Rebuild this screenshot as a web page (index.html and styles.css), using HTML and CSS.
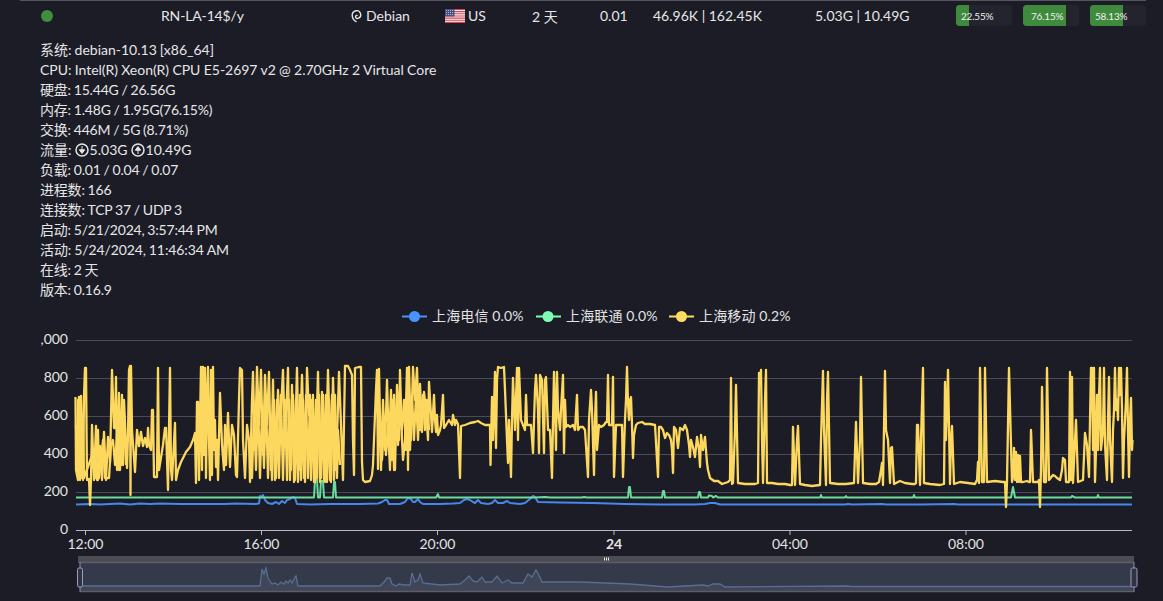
FILE: index.html
```html
<!DOCTYPE html>
<html lang="zh">
<head>
<meta charset="utf-8">
<title>RN-LA-14$/y</title>
<link rel="stylesheet" href="styles.css">
</head>
<body>
<div class="row">
  <div class="cell"><span class="dot"></span></div>
  <div class="cell name">RN-LA-14$/y</div>
  <div class="cell os">
    <svg class="swirl" viewBox="0 0 12 14"><path d="M6.600 6.600c-.9-.6-2.200 0-2.100 1.400.1 1.200 1.600 1.900 3 1.200 1.700-.9 2.600-2.800 2-4.600C8.900 2.500 7 1.300 5 1.700 2.600 2.200 1 4.300 1.200 6.800c.2 2.700 1.900 4.900 4.300 6" /></svg>
    <span>Debian</span>
  </div>
  <div class="cell os">
    <svg class="flag" viewBox="0 0 20 14">
      <rect width="20" height="14" fill="#f3f0f0"/>
      <path d="M0 .5h20M0 2.650h20M0 4.800h20M0 6.950h20M0 9.100h20M0 11.250h20M0 13.400h20" stroke="#d5495a" stroke-width="1.100"/>
      <rect width="9.500" height="7.500" fill="#4a4f82"/>
      <path d="M1 1.500h8M1 3.500h8M1 5.500h8" stroke="#c9cbe0" stroke-width=".8" stroke-dasharray="1 1"/>
    </svg>
    <span>US</span>
  </div>
  <div class="cell">2 天</div>
  <div class="cell">0.01</div>
  <div class="cell">46.96K | 162.45K</div>
  <div class="cell">5.03G | 10.49G</div>
  <div class="bars">
    <div class="bar"><div class="fill" style="width:22.55%"></div><span class="pct pct-a">22.55%</span></div>
    <div class="bar"><div class="fill" style="width:76.15%"></div><span class="pct pct-b">76.15%</span></div>
    <div class="bar"><div class="fill" style="width:58.13%"></div><span class="pct pct-a">58.13%</span></div>
  </div>
</div>

<div class="info">
  <div class="loose">系统: debian-10.13 [x86_64]</div>
  <div class="cpu">CPU: Intel(R) Xeon(R) CPU E5-2697 v2 @ 2.70GHz 2 Virtual Core</div>
  <div>硬盘: 15.44G / 26.56G</div>
  <div>内存: 1.48G / 1.95G(76.15%)</div>
  <div>交换: 446M / 5G (8.71%)</div>
  <div class="loose">流量: <svg class="arrow" viewBox="0 0 14 14"><circle cx="7" cy="7" r="6" fill="none" stroke="#e6e6e6" stroke-width="1.500"/><path d="M7 3v5M4.300 6.800 7 10.500l2.700-3.700z" fill="#e6e6e6" stroke="#e6e6e6"/></svg>5.03G <svg class="arrow" viewBox="0 0 14 14"><circle cx="7" cy="7" r="6" fill="none" stroke="#e6e6e6" stroke-width="1.500"/><path d="M7 11V6M4.300 7.200 7 3.500l2.700 3.700z" fill="#e6e6e6" stroke="#e6e6e6"/></svg>10.49G</div>
  <div>负载: 0.01 / 0.04 / 0.07</div>
  <div>进程数: 166</div>
  <div>连接数: TCP 37 / UDP 3</div>
  <div>启动: 5/21/2024, 3:57:44 PM</div>
  <div class="mid">活动: 5/24/2024, 11:46:34 AM</div>
  <div>在线: 2 天</div>
  <div>版本: 0.16.9</div>
</div>

<svg class="chart" viewBox="0 300 1163 301">
  <g class="legend">
    <path class="s-blue" d="M402 316.500h25"/><circle class="d-blue" cx="414.500" cy="316.500" r="5.500"/>
    <text x="432" y="321">上海电信 0.0%</text>
    <path class="s-green" d="M536 316.500h25"/><circle class="d-green" cx="548" cy="316.500" r="5.500"/>
    <text x="566" y="321">上海联通 0.0%</text>
    <path class="s-yellow" d="M669 316.500h25"/><circle class="d-yellow" cx="681.500" cy="316.500" r="5.500"/>
    <text x="699" y="321">上海移动 0.2%</text>
  </g>

  <path class="grid" d="M76 340.500H1132M76 378.500H1132M76 416.500H1132M76 454.500H1132M76 492.500H1132"/>
  <path class="axis" d="M76 530.500H1132M85.500 530v5M261.500 530v5M437.500 530v5M614 530v5M790 530v5M966 530v5"/>

  <g class="ylabels">
    <text x="68" y="344">,000</text>
    <text x="68" y="382">800</text>
    <text x="68" y="420">600</text>
    <text x="68" y="458">400</text>
    <text x="68" y="496">200</text>
    <text x="68" y="534">0</text>
  </g>
  <g class="xlabels">
    <text x="85.500" y="549">12:00</text>
    <text x="261.500" y="549">16:00</text>
    <text x="437.500" y="549">20:00</text>
    <text class="bold" x="614" y="549">24</text>
    <text x="790" y="549">04:00</text>
    <text x="966" y="549">08:00</text>
  </g>

  <polyline class="line thin blue" points="76,504.500 90,504 100,504.500 120,503.500 130,504.500 140,503.500 150,504 160,503.500 180,504 200,504 225,504 235,503.500 255,504 259,503.500 260,496 262,497 263,495 265,500 268,503 272,504 276,502 279,504 282,501 285,503 287,500 290,499 293,497 295,498 297,504 310,504.500 330,504 360,504 378,503.500 382,502 385,500 387,500 389,504 400,504 405,502 408,498 411,499 413,502 415,502 418,499 420,502 423,504 440,504 453,503.500 460,503 464,500 467,499 470,500 473,502 475,503 478,500 481,503 488,504 492,503 495,500 498,503 503,503 507,501 510,503 520,504 525,503 530,499 533,496 535,497 538,502 560,502.500 593,503 625,504 660,504.500 695,504.500 705,504 710,503 715,503 720,504.500 845,504.500 848,504 852,504.500 882,504 886,504.500 920,504.500 954,504 958,504.500 990,504.500 1132,504.500"/>
  <polyline class="line thin green" points="76,497.500 314,497.500 315,480 317,479 318,497.500 320,497.500 321,481 323,481 324,497.500 333,497.500 334,482 335,482 336,497.500 436,497.500 438,494 439,497.500 535,497.500 545,497 550,497.500 582,497.500 584,497 587,497.500 628,497.500 629,487 630,487 631,497.500 662,497.500 663,491 664,491 665,497.500 698,497.500 699,492 700,492 701,497.500 708,497.500 709,495.500 712,496 713,497.500 716,496 718,497.500 820,497.500 821,495 822,497.500 845,497.500 846,496 847,497.500 913,497.500 914,495 915,497.500 1011,497.500 1013,487 1015,497.500 1071,497.500 1072,496 1075,497.500 1097,497.500 1098,495 1099,497.500 1132,497.500"/>
  <polyline class="line yellow" points="75.500,397 76,470 78,480 79,397 80,480 81,396 83,480 84,396 85,368 86,368 87,480 89,479 90,505 91,480 92,425 94,480 96,426 97,480 98,480 100,446 102,480 104,432 106,480 108,437 110,463 112,370 114,428 115,428 116,377 117,470 119,393 120,470 122,395 123,465 124,400 127,468 128,435 129,370 130,366 130.500,495 131,366 132,430 135,472 137,430 139,446 141,432 143,446 145,438 147,447 148,428 149,445 151,450 152,410 153,410 154,477 157,477 158,368 159,470 163,445 165,428 166,428 168,490 170,368 171,470 172,480 175,423 176,480 178,470 181,462 183,458 186,452 190,447 193,440 195,433 196,483 197,402 198,402 199,480 201,367 202,470 203,367 204,455 205,368 206,478 207,400 208,367 209,440 210,480 211,370 212,475 213,367 214,450 215,420 216,467 217,440 218,480 220,393 222,445 224,470 225,425 226,465 228,413 230,467 232,425 234,435 236,475 237,477 239,400 240,368 242,370 243,440 245,478 247,425 249,440 250,482 252,400 253,372 255,450 257,367 259,425 261,370 263,455 265,375 267,425 269,372 271,470 273,380 275,480 278,390 280,430 283,370 285,445 288,368 290,480 292,385 294,482 297,368 299,470 302,375 305,482 307,368 309,415 312,400 315,482 318,372 320,482 322,392 325,482 328,370 331,482 333,378 336,470 339,372 341,425 343,480 345,366 348,366 350,370 352,375 353,440 354,475 355,368 359,367 361,367 362,462 363,480 365,482 370,481 372,475 373,465 374,440 376,390 377,370 378,469 379,369 381,470 383,400 385,450 387,380 389,450 391,390 392,460 394,395 395,470 397,385 399,440 400,370 402,440 403,460 405,440 407,368 408,470 409,367 411,440 413,367 415,400 417,368 419,430 420,384 422,432 424,392 426,410 428,440 429,382 431,415 432,432 434,395 435,420 436,432 437,415 438,435 440,430 441,425 443,395 444,428 446,425 449,420 452,425 453,415 455,425 456,420 458,424 460,478 461,426 465,425 470,423 475,422 478,421 481,423 485,425 490,425 490.500,465 492,397 493,440 495,372 496,448 497,380 498,367 501,368 504,367 505,390 507,440 508,463 509,420 511,477 512,420 513,378 515,430 517,368 518,440 519,368 521,420 523,425 525,430 526,395 527,425 531,425 533,453 535,390 536,375 538,410 539,453 540,375 542,380 544,453 545,380 546,377 548,430 550,430 552,478 553,420 554,372 556,450 557,372 558,410 560,430 561,410 563,375 564,453 565,400 566,427 568,425 570,427 573,425 575,430 577,395 578,430 580,427 583,427 585,430 588,477 589,420 591,390 592,410 594,475 595,420 596,392 597,450 599,425 601,427 604,425 606,422 607,422 608,375 609,425 612,425 613,377 614,477 616,425 620,425 622,425 623,477 625,420 626,400 627,367 628,403 629,420 630,400 631,397 632,425 633,458 634,435 636,425 638,423 642,422 645,424 650,424 655,425 658,477 659,427 661,427 663,430 665,438 667,433 669,435 671,440 672,450 673,473 674,427 676,430 678,448 680,428 683,430 685,425 687,430 689,445 690,457 691,440 693,447 695,457 697,437 699,450 700,467 701,435 703,450 705,437 706,450 707,463 708,470 710,478 714,481 718,481 722,484 725,483 728,482 730,480 731,378 732,484 733,483 735,430 736,385 738,483 745,484 750,484 755,484 758,483 759,373 760,380 761,370 762,440 763,483 765,400 766,370 767,483 772,483 778,484 785,484 790,485 792,485 793,427 795,485 797,440 798,426 800,484 805,485 812,486 820,485 821,440 823,371 824,430 826,485 827,400 828,372 830,483 838,484 846,484 854,483 856,422 858,483 860,440 861,377 863,483 870,484 876,484 879,482 881,470 882,463 883,485 885,371 886,430 888,440 890,483 891,448 892,447 894,484 900,481 905,483 912,484 915,484 916,483 917,425 918,425 920,485 921,440 923,368 924,483 930,484 940,485 944,484 945,382 946,440 948,370 950,484 951,440 952,426 954,484 960,482 968,483 975,484 977,480 978,462 979,483 980,368 982,482 984,482 985,368 987,482 995,481 1003,482 1005,482 1006,507 1007,482 1009,368 1011,445 1012,482 1013,475 1014,448 1015,480 1016,452 1017,482 1018,455 1019,482 1020,456 1021,482 1023,482 1027,481 1029,482 1030,482 1031,430 1033,482 1038,482 1039,480 1040,507 1041,470 1042,387 1044,482 1046,482 1047,368 1049,480 1053,475 1055,476 1057,478 1060,480 1062,470 1063,458 1065,460 1066,482 1069,482 1070,372 1071,480 1072,377 1073,483 1075,440 1076,420 1078,482 1083,480 1085,433 1087,445 1089,477 1090,420 1091,368 1092,368 1093,450 1094,368 1095,482 1096,450 1097,395 1098,450 1099,395 1100,368 1101,450 1103,430 1104,368 1105,445 1107,480 1108,420 1109,377 1110,440 1112,482 1113,430 1114,410 1115,368 1116,410 1117,400 1118,420 1119,368 1120,395 1121,368 1122,410 1123,478 1124,440 1125,420 1126,400 1127,368 1128,430 1129,477 1130,420 1131,398 1132,450 1132.500,440"/>
  <polyline class="line yellow" points="76,425 77,470 78,400 79,478 80,425 81,478 83,420 84,478 94,450 95,478 98,430 99,478 103,440 105,478 109,478 111,445 113,440 115,465 118,420 119,470 121,420 122,465 124,420 126,465"/>
  <polyline class="line yellow" points="251,440 252,478 254,410 256,470 258,400 260,478 262,410 264,468 266,400 268,478 270,415 272,480 274,400 276,478 277,400 279,478 281,395 283,480 285,400 287,480 289,400 291,470 293,395 295,480 296,400 298,482 300,395 301,480 303,400 304,478 306,395 308,478 310,395 311,480 313,395 314,482 316,400 317,478 319,395 321,478 323,395 324,480 326,395 327,482 329,400 330,480 332,395 334,480 335,395 337,478 338,430 340,465"/>
  <polyline class="line yellow" points="380,425 382,460 384,425 386,455 388,425 390,470 392,400 394,470 396,420 398,445 400,410 402,430 404,400 406,450 408,400 410,450 412,395 414,440 416,395 418,440 420,395 421,430 423,395 425,430 427,400 429,430"/>

  <rect class="dz-top" x="78" y="556" width="1056" height="7"/>
  <rect class="dz-body" x="80" y="562" width="1054" height="30"/>
  <path class="dz-area" d="M80 592V586H260L262 569 264 574 266 568 268 578 272 584 275 583 278 585 281 582 284 584 286 581 288 583 290 580 292 583 294 579 296 576 298 586H380L384 582 387 578 390 578 392 584 396 586 399 584 404 585 410 585 412 573 415 582 418 580 420 574 423 583 440 585 460 584 465 580 469 576 473 581 477 582 482 577 485 582 488 582 492 582 497 576 502 583 508 580 512 583 523 583 528 574 532 577 536 570 538 573 542 582 580 582 630 584 667 587 703 585 708 586 713 584 720 584 725 587 1132 586.500V592Z"/>
  <path class="dz-spark" d="M80 586H260L262 569 264 574 266 568 268 578 272 584 275 583 278 585 281 582 284 584 286 581 288 583 290 580 292 583 294 579 296 576 298 586H380L384 582 387 578 390 578 392 584 396 586 399 584 404 585 410 585 412 573 415 582 418 580 420 574 423 583 440 585 460 584 465 580 469 576 473 581 477 582 482 577 485 582 488 582 492 582 497 576 502 583 508 580 512 583 523 583 528 574 532 577 536 570 538 573 542 582 580 582 630 584 667 587 703 585 708 586 713 584 720 584 725 587 848 586 852 586.500 1132 586.500"/>
  <path class="dz-edge" d="M80 562.500H1134M80 591.500H1134"/>
  <path class="dz-mid" d="M604 557.500h1v3h-1zM606 557.500h1v3h-1zM608 557.500h1v3h-1z"/>
  <g class="dz-handle">
    <path d="M80 562v30M1134 562v30"/>
    <rect x="77.500" y="568" width="5" height="19" rx="1.500"/>
    <rect x="1131" y="568" width="6" height="19" rx="1.500"/>
  </g>
</svg>
</body>
</html>
```

FILE: styles.css
```css
html, body {
  margin: 0;
  padding: 0;
  height: 100%;
  overflow: hidden;
  background: #1b1c26;
  color: #e6e6e6;
  font-family: Lato, "Noto Sans CJK SC", sans-serif;
  font-size: 14px;
}

.row {
  display: grid;
  grid-template-columns: 121px 190px 94px 87px 68px 53px 162px 141px auto;
  align-items: center;
  height: 30px;
  margin-left: 20px;
  margin-right: 17px;
  padding-left: 20px;
  border-top: 1px solid #55565e;
  box-sizing: border-box;
}

.cell {
  white-space: nowrap;
  display: flex;
  align-items: center;
}

.name {
  letter-spacing: -.15px;
}

.dot {
  width: 12px;
  height: 12px;
  margin-left: 1px;
  border-radius: 50%;
  background: #3f8f3d;
}

.os {
  gap: 3px;
}

.swirl {
  width: 12px;
  height: 14px;
  fill: none;
  stroke: #e6e6e6;
  stroke-width: 1.400;
}

.flag {
  width: 20px;
  height: 14px;
}

.bars {
  display: flex;
  gap: 11px;
}

.bar {
  position: relative;
  width: 56px;
  height: 21px;
  border-radius: 3px;
  background: #23242d;
  overflow: hidden;
}

.fill {
  height: 100%;
  background: #3f8a3c;
  border-radius: 3px 0 0 3px;
}

.pct {
  position: absolute;
  top: 0;
  line-height: 22px;
  font-size: 10px;
  color: #f0f0f0;
  letter-spacing: -.2px;
}

.pct-a { left: 5px; }
.pct-b { left: 8px; }

.info {
  padding: 10px 0 0 40px;
  line-height: 20px;
  height: 260px;
  letter-spacing: -.2px;
  word-spacing: -.5px;
}

.info .cpu {
  letter-spacing: -.03px;
  word-spacing: -.2px;
}

.info .loose {
  letter-spacing: 0;
}

.info .mid {
  letter-spacing: -.1px;
}

.arrow {
  width: 14px;
  height: 14px;
  margin-right: 1px;
  vertical-align: -2px;
}

.chart {
  display: block;
  width: 1163px;
  height: 301px;
}

.chart text {
  font-family: Lato, "Noto Sans CJK SC", sans-serif;
  font-size: 14px;
  fill: #e3e3e3;
}

.legend text { letter-spacing: .15px; }

.s-blue { stroke: #4992ff; }
.s-green { stroke: #7cffb2; }
.s-yellow { stroke: #fddd60; }
.d-blue { fill: #4992ff; }
.d-green { fill: #7cffb2; }
.d-yellow { fill: #fddd60; }

.legend path { stroke-width: 2; fill: none; }

.grid {
  stroke: #4b4b55;
  stroke-width: 1;
  fill: none;
}

.axis {
  stroke: #b9b9c2;
  stroke-width: 1;
  fill: none;
}

.ylabels text { text-anchor: end; }
.xlabels text { text-anchor: middle; }
.chart .bold { font-weight: 700; }

.line {
  fill: none;
  stroke-width: 2.300;
  stroke-linejoin: round;
}

.line.thin { stroke-width: 2; }

.blue { stroke: #4688ea; }
.green { stroke: #6bdc9c; }
.yellow { stroke: #fdd85f; }

.dz-top { fill: #4b4c54; }
.dz-body { fill: #343a49; }
.dz-area { fill: #3e4657; }
.dz-spark { fill: none; stroke: #5a6d90; stroke-width: 1.300; }
.dz-edge { stroke: #5c5d68; stroke-width: 1.500; fill: none; }
.dz-mid { fill: #e8e8e8; }

.dz-handle path { stroke: #8b8ea6; stroke-width: 1; fill: none; }
.dz-handle rect { fill: #2f3342; stroke: #9a9dc0; stroke-width: 1; }
```
